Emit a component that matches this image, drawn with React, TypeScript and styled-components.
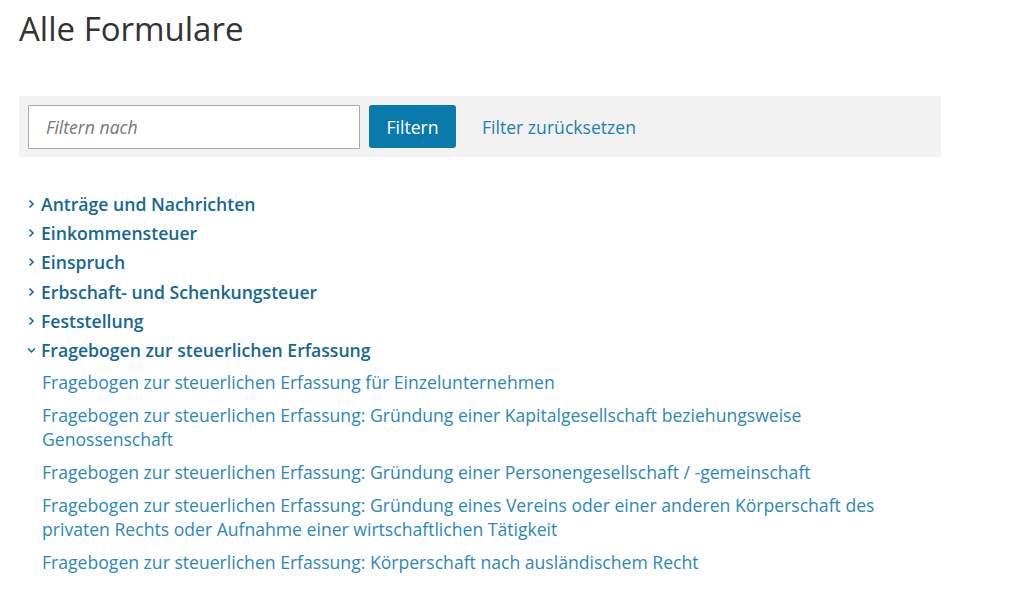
import React from 'react';
import styled, { createGlobalStyle } from 'styled-components';

const GlobalStyle = createGlobalStyle`
  html, body {
    margin: 0;
    padding: 0;
    background: #fff;
    font-family: "Open Sans", "Liberation Sans", sans-serif;
  }
`;

const Page = styled.div`
  padding: 7px 0 0 19px;
  width: 922px;
`;

const Title = styled.h1`
  margin: 0 0 45px 0;
  font-size: 33px;
  font-weight: 400;
  color: #333;
  line-height: 44px;
`;

const FilterBar = styled.div`
  display: flex;
  align-items: center;
  background: #f2f2f2;
  padding: 9px 9px;
  height: 43px;
`;

const FilterInput = styled.input`
  box-sizing: border-box;
  width: 332px;
  height: 44px;
  border: 1px solid #a9a9a9;
  border-radius: 1px;
  padding: 0 17px;
  font-family: inherit;
  font-size: 17.6px;
  font-style: italic;
  color: #333;
  background: #fff;

  &::placeholder {
    color: #767676;
    font-style: italic;
  }
`;

const FilterButton = styled.button`
  margin-left: 9px;
  height: 43px;
  width: 87px;
  border: none;
  border-radius: 3px;
  background: #0a7aab;
  color: #fff;
  font-family: inherit;
  font-size: 17.6px;
  font-weight: 400;
  cursor: pointer;
`;

const ResetLink = styled.a`
  margin-left: 26px;
  font-size: 17.6px;
  color: #1f7fb1;
  text-decoration: none;
  cursor: pointer;
`;

const Groups = styled.ul`
  list-style: none;
  margin: 32px 0 0 0;
  padding: 0 0 0 8px;
`;

const Group = styled.li`
  margin: 0;
`;

const GroupHead = styled.a`
  display: flex;
  align-items: center;
  height: 29.3px;
  font-size: 17.6px;
  font-weight: 600;
  color: #156891;
  text-decoration: none;
  cursor: pointer;

  svg {
    flex: none;
    margin-right: 5px;
  }
`;

const Forms = styled.ul`
  list-style: none;
  margin: 5px 0 0 0;
  padding: 0 0 0 15px;
  max-width: 893px;
`;

const FormItem = styled.li`
  font-size: 17.6px;
  line-height: 24px;
  color: #2b88b8;
  margin-bottom: 9px;

  a {
    color: inherit;
    text-decoration: none;
  }
`;

function Chevron({ open }: { open?: boolean }) {
  return (
    <svg width="9" height="12" viewBox="0 0 9 12">
      {open ? (
        <path d="M1 4.5 L4.5 8 L8 4.5" fill="none" stroke="#156891" strokeWidth="1.5" />
      ) : (
        <path d="M2.5 2.5 L6 6 L2.5 9.5" fill="none" stroke="#156891" strokeWidth="1.6" />
      )}
    </svg>
  );
}

const groups = [
  'Anträge und Nachrichten',
  'Einkommensteuer',
  'Einspruch',
  'Erbschaft- und Schenkungsteuer',
  'Feststellung',
];

const forms = [
  'Fragebogen zur steuerlichen Erfassung für Einzelunternehmen',
  'Fragebogen zur steuerlichen Erfassung: Gründung einer Kapitalgesellschaft beziehungsweise Genossenschaft',
  'Fragebogen zur steuerlichen Erfassung: Gründung einer Personengesellschaft / -gemeinschaft',
  'Fragebogen zur steuerlichen Erfassung: Gründung eines Vereins oder einer anderen Körperschaft des privaten Rechts oder Aufnahme einer wirtschaftlichen Tätigkeit',
  'Fragebogen zur steuerlichen Erfassung: Körperschaft nach ausländischem Recht',
];

export default function App() {
  return (
    <>
      <GlobalStyle />
      <Page>
        <Title>Alle Formulare</Title>
        <FilterBar>
          <FilterInput placeholder="Filtern nach" />
          <FilterButton>Filtern</FilterButton>
          <ResetLink>Filter zurücksetzen</ResetLink>
        </FilterBar>
        <Groups>
          {groups.map((g) => (
            <Group key={g}>
              <GroupHead>
                <Chevron />
                {g}
              </GroupHead>
            </Group>
          ))}
          <Group>
            <GroupHead>
              <Chevron open />
              Fragebogen zur steuerlichen Erfassung
            </GroupHead>
            <Forms>
              {forms.map((f) => (
                <FormItem key={f}>
                  <a>{f}</a>
                </FormItem>
              ))}
            </Forms>
          </Group>
        </Groups>
      </Page>
    </>
  );
}
